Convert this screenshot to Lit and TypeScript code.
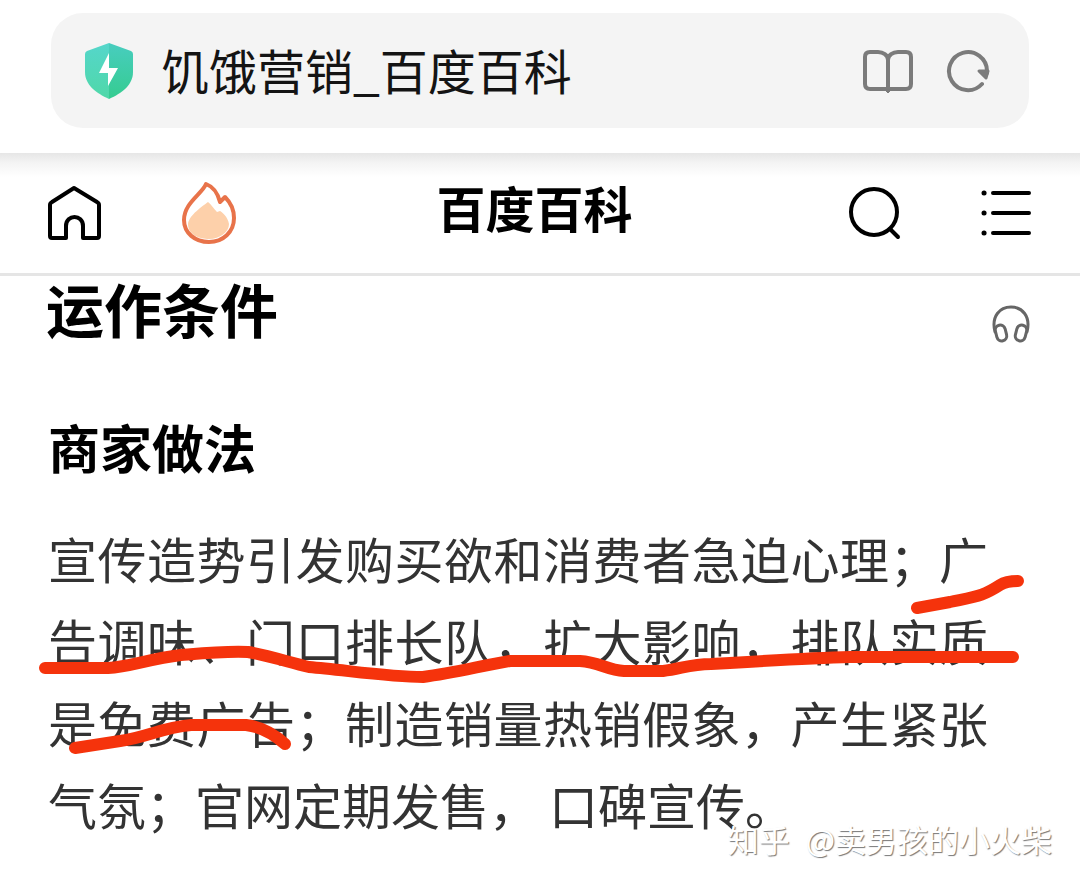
import { LitElement, html, css } from "lit";
import { customElement } from "lit/decorators.js";

@customElement("browser-bar")
class BrowserBar extends LitElement {
  static styles = css`
    :host {
      display: block;
      padding: 13px 51px 25px;
    }
    .bar {
      display: flex;
      align-items: center;
      height: 115px;
      padding: 0 39px 0 33px;
      border-radius: 32px;
      background: #f4f4f4;
      box-sizing: border-box;
    }
    .title {
      flex: 1;
      margin-left: 27px;
      padding-bottom: 4px;
      font-size: 48px;
      line-height: 72px;
      color: #141414;
      white-space: nowrap;
    }
    button {
      display: block;
      padding: 0;
      border: 0;
      background: none;
      margin-left: 32px;
    }
    svg {
      display: block;
    }
  `;

  render() {
    return html`
      <div class="bar">
        <svg width="50" height="56" viewBox="0 0 50 56" aria-hidden="true">
          <defs>
            <linearGradient id="l" x1="0" y1="0" x2="0" y2="1">
              <stop offset="0" stop-color="#55d6cb" />
              <stop offset="1" stop-color="#4fd8a8" />
            </linearGradient>
            <linearGradient id="r" x1="0" y1="0" x2="0" y2="1">
              <stop offset="0" stop-color="#48cdbf" />
              <stop offset="1" stop-color="#35cc90" />
            </linearGradient>
          </defs>
          <path fill="url(#l)" d="M25 0 3 8Q1 9 1 11V29C1 42 12 50 25 56Z" />
          <path fill="url(#r)" d="M25 0 47 8Q49 9 49 11V29C49 42 38 50 25 56Z" />
          <path fill="#fff" d="M25 10 15 30H24V43L34 25H25Z" />
        </svg>
        <span class="title">饥饿营销_百度百科</span>
        <button aria-label="阅读模式">
          <svg width="52" height="48" viewBox="0 0 52 48" fill="none" stroke="#7b7b7b" stroke-width="4" stroke-linejoin="round">
            <path d="M26 13C26 8 21 5 16 5H8Q3 5 3 10V37Q3 42 8 42H44Q49 42 49 37V10Q49 5 44 5H36C31 5 26 8 26 13V43" />
            <path d="M23 43H29L26 46Z" fill="#7b7b7b" stroke-width="1" />
          </svg>
        </button>
        <button aria-label="刷新">
          <svg width="44" height="48" viewBox="0 0 44 48" fill="none" stroke="#7b7b7b" stroke-width="4" stroke-linecap="round">
            <path d="M36 37A19 19 0 1 1 41 24V26" />
            <path d="M33 24H42L40 31Z" fill="#7b7b7b" stroke-width="3" stroke-linejoin="round" />
          </svg>
        </button>
      </div>
    `;
  }
}

@customElement("site-nav")
class SiteNav extends LitElement {
  static styles = css`
    :host {
      display: grid;
      grid-template-columns: 1fr auto 1fr;
      align-items: center;
      height: 120px;
      padding: 0 48px 0 47px;
      border-bottom: 3px solid #e5e5e5;
      background: linear-gradient(#e6e6e6, #f4f4f4 10px, #fff 24px);
    }
    .side {
      display: flex;
      align-items: center;
      gap: 78px;
    }
    .end {
      justify-content: flex-end;
    }
    h1 {
      margin: 0;
      padding: 0 10px 12px 0;
      font-size: 49px;
      line-height: 72px;
      font-weight: 700;
      color: #000;
    }
    a,
    button {
      display: block;
      padding: 0;
      border: 0;
      background: none;
      color: #000;
    }
    svg {
      display: block;
    }
  `;

  render() {
    return html`
      <div class="side">
        <a href="#" aria-label="首页">
          <svg width="55" height="56" viewBox="0 0 55 56" fill="none" stroke="currentColor" stroke-width="4" stroke-linejoin="round">
            <path d="M27 3 50 17Q52 18 52 20V51Q52 53 50 53H36V41C36 29 19 29 19 41V53H5Q3 53 3 51V20Q3 18 5 17Z" />
          </svg>
        </a>
        <a href="#" aria-label="热点">
          <svg width="58" height="64" viewBox="0 0 58 64" fill="none">
            <path fill="#fdd0aa" d="M28 21C23 25 9 34 8 43C8 54 20 58 29 58C40 58 49 51 49 43C48 36 42 31 40 30L37 31C34 28 31 23 28 21Z" />
            <path stroke="#e8734a" stroke-width="4" stroke-linejoin="round" d="M26 3C22 13 4 22 4 39C4 52 15 61 29 61C43 61 54 51 54 37C54 29 50 21 45 16L40 21C38 13 34 6 26 3Z" />
          </svg>
        </a>
      </div>
      <h1>百度百科</h1>
      <div class="side end">
        <button aria-label="搜索">
          <svg width="54" height="54" viewBox="0 0 54 54" fill="none" stroke="currentColor" stroke-width="4" stroke-linecap="round">
            <circle cx="26" cy="26" r="23" />
            <path d="M42 43 50 51" />
          </svg>
        </button>
        <button aria-label="目录">
          <svg width="52" height="48" viewBox="0 0 52 48" fill="none" stroke="currentColor" stroke-width="4" stroke-linecap="round">
            <path d="M13 4H49M13 24H49M13 44H49" />
            <path stroke-width="5" d="M4 4H4.1M4 24H4.1M4 44H4.1" />
          </svg>
        </button>
      </div>
    `;
  }
}

@customElement("app-root")
class AppRoot extends LitElement {
  static styles = css`
    :host {
      display: block;
      min-height: 100vh;
      background: #fff;
      color: #000;
      font-family: "Noto Sans CJK SC", sans-serif;
    }
    article {
      position: relative;
      padding: 0 46px 38px;
    }
    .head {
      display: flex;
      justify-content: space-between;
      align-items: flex-start;
      padding-right: 4px;
    }
    h2,
    h3,
    p {
      margin: 0;
    }
    h2 {
      font-size: 58px;
      line-height: 64px;
    }
    h3 {
      margin: 68px 2px 0;
      font-size: 52px;
      line-height: 72px;
    }
    p {
      margin: 34px 46px 0 2px;
      font-size: 49px;
      line-height: 82px;
      color: #333;
      text-align: justify;
    }
    button {
      display: block;
      margin-top: 29px;
      padding: 0;
      border: 0;
      background: none;
    }
    button svg {
      display: block;
    }
    .marks {
      position: absolute;
      top: 0;
      left: 0;
      width: 100%;
      pointer-events: none;
    }
    .watermark {
      position: absolute;
      right: 28px;
      bottom: 21px;
      display: flex;
      gap: 16px;
      font-size: 31px;
      line-height: 46px;
      color: #fff;
      text-shadow: 1px 1px 1px #777;
    }
  `;

  render() {
    return html`
      <browser-bar></browser-bar>
      <site-nav></site-nav>
      <article>
        <div class="head">
          <h2>运作条件</h2>
          <button aria-label="朗读">
            <svg width="38" height="38" viewBox="0 0 38 38" fill="none" stroke="#666" stroke-width="3" stroke-linecap="round" stroke-linejoin="round">
              <path d="M3 27C-1 11 8 2 19 2S39 11 35 27" />
              <rect x="4" y="20" width="10" height="16" rx="5" transform="rotate(-14 9 28)" />
              <rect x="24" y="20" width="10" height="16" rx="5" transform="rotate(14 29 28)" />
            </svg>
          </button>
        </div>
        <h3>商家做法</h3>
        <p>宣传造势引发购买欲和消费者急迫心理；广告调味、门口排长队，扩大影响，排队实质是免费广告；制造销量热销假象，产生紧张气氛；官网定期发售， 口碑宣传。</p>
        <svg class="marks" viewBox="0 276 1080 610" fill="none" stroke="#f5330c" stroke-width="12" stroke-linecap="round" stroke-linejoin="round" aria-hidden="true">
          <path d="M917 608 950 602C978 596 983 596 1000 585Q1006 581 1018 581" />
          <path d="M45 668H108C130 667 148 659 181 655C205 653 225 651 248 652C266 655 285 661 309 667C345 670 390 677 423 677C455 673 480 666 510 661H580C599 662 607 670 624 671H663C681 669 690 664 711 664C760 661 810 658 850 657H1013" />
          <path d="M75 748 120 741C148 737 160 728 191 725H246C263 727 276 736 285 744" />
        </svg>
        <div class="watermark"><span>知乎</span><span>@卖男孩的小火柴</span></div>
      </article>
    `;
  }
}
